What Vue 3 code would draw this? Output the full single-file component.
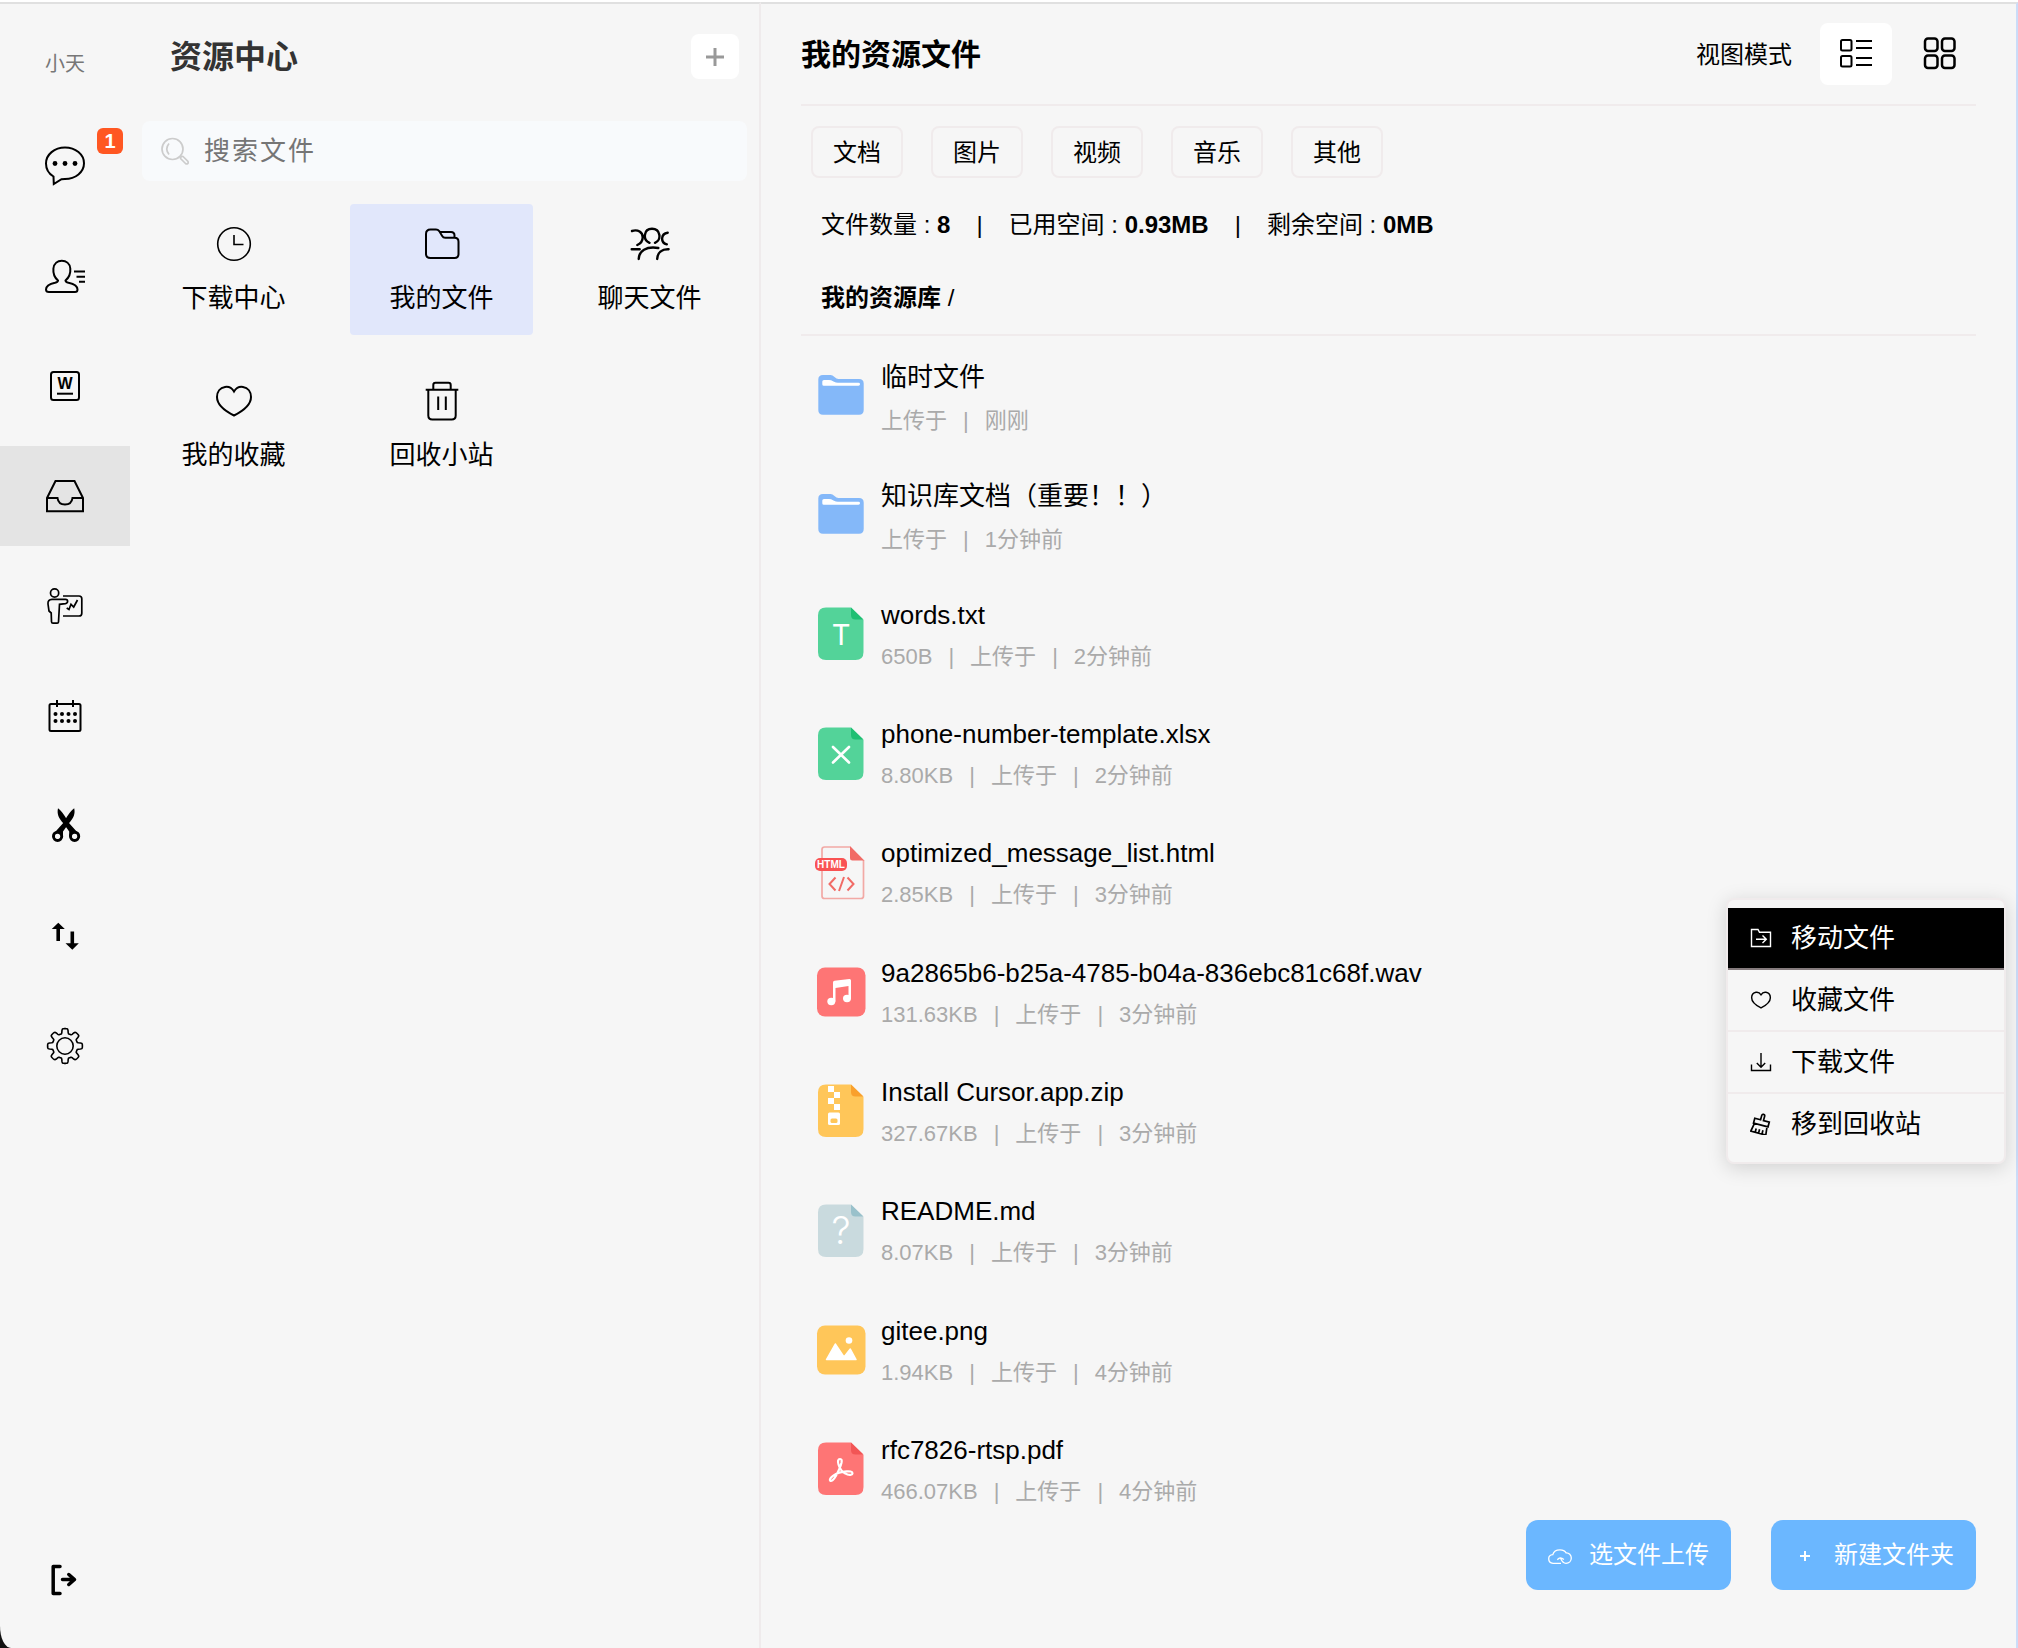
<script setup>
import { ref } from 'vue'

function gearPath(cx, cy) {
  const points = []
  for (let i = 0; i < 160; i++) {
    const a = (i / 160) * Math.PI * 2
    const r = 15 + 2.4 * Math.tanh(3 * (Math.cos(8 * a) + 0.1))
    points.push(`${(cx + r * Math.cos(a)).toFixed(2)} ${(cy + r * Math.sin(a)).toFixed(2)}`)
  }
  return `M${points.join('L')}z`
}

const heart =
  '<path d="M20 10.5C17.5 6.5 14 5.5 11 6C6 6.8 3 11 3 16C3 23.5 10 29.5 20 34.5C30 29.5 37 23.5 37 16C37 11 34 6.8 29 6C26 5.5 22.5 6.5 20 10.5z"/>'

const navItems = [
  {
    id: 'chat', label: '消息', badge: 1,
    icon: '<path d="M8.5 30.5C3.5 27.5 1 23 1 17.5C1 8.5 9.5 1.5 20 1.5S39 8.5 39 17.3S30.5 33 20 33q-2 0-3.5 .2L8.8 38z"/><g fill="#000" stroke="none"><circle cx="10" cy="17.5" r="2.4"/><circle cx="20" cy="17.5" r="2.4"/><circle cx="30" cy="17.5" r="2.4"/></g>'
  },
  {
    id: 'contacts', label: '联系人',
    icon: '<path d="M13 24.5C9.5 21.5 8 17 8.4 12.5C9 7.5 12.5 4.8 16.8 4.8S24.800 7.5 25.3 12.5C25.7 17 24 21.5 20.5 24.5q0 1.5 3 2.3q9 2 9 6.7q0 2.5-2.5 2.5H4q-3 0-3-2.5q0-4.7 9-6.7q3-.8 3-2.3z"/><path d="M29 15.4h11M31.5 20.7h8.5M34 25.8h6"/>'
  },
  {
    id: 'docs', label: '文档',
    icon: '<rect x="6" y="6" width="28" height="28" rx="2.5"/><path d="M12 27.7h16"/><text x="20" y="23" text-anchor="middle" font-size="16" font-weight="700" fill="#000" stroke="none">W</text>'
  },
  {
    id: 'files', label: '资源',
    icon: '<path d="M10.5 5h19L38 22v13.2H2V22zM2 22h10.5c.5 4 3.5 6.5 7.5 6.5s7-2.5 7.5-6.5H38"/>'
  },
  {
    id: 'meeting', label: '会议',
    icon: '<g stroke-width="1.7"><circle cx="9.6" cy="7" r="4.1"/><path d="M7 13.4H20.5c2.8 0 2.8 3.8 0 4.2L14.5 18.3L13.5 36q-.1 1.2-1.3 1.2H8q-1.4 0-1.5-1.4L6.2 27L4 25L3 18q-.4-4.4 4-4.6z"/><path d="M18 10h16q2.8 0 2.8 2.8v14.4q0 2.8-2.8 2.8H18M21.7 22l2.3 1.5l2-5.2l2.7 2.7L32.5 14"/></g>'
  },
  {
    id: 'calendar', label: '日历',
    icon: '<rect x="4.5" y="8" width="31" height="27" rx="1.5"/><path d="M12 4v7M28 4v7"/><g fill="#000" stroke="none"><circle cx="10.5" cy="18" r="2"/><circle cx="17" cy="18" r="2"/><circle cx="23.5" cy="18" r="2"/><circle cx="30" cy="18" r="2"/><circle cx="10.5" cy="25" r="2"/><circle cx="17" cy="25" r="2"/><circle cx="23.5" cy="25" r="2"/><circle cx="30" cy="25" r="2"/></g>'
  },
  {
    id: 'cut', label: '截图',
    icon: '<g stroke-width="3.2"><circle cx="12.6" cy="30.3" r="4"/><circle cx="29.6" cy="30.3" r="4"/></g><g fill="#000" stroke="none"><path d="M13 2.3C11.8 8 13.5 12 18.5 17.500L24.200 25.500V30h2L32.500 26.500L24 17C21 12 17 5 13 2.3z"/><path d="M29.2 2.3C30.4 8 28.7 12 23.7 17.500L18 25.500V30h-2L9.700 26.500L18.200 17C21.2 12 25.2 5 29.2 2.3z"/></g><g fill="#f6f6f6" stroke="none"><circle cx="12.6" cy="30.3" r="2.6"/><circle cx="29.6" cy="30.3" r="2.6"/></g>'
  },
  {
    id: 'transfer', label: '传输',
    icon: '<path fill="#000" stroke="none" d="M13.3 6.7L19.8 13H15v12h-3.6V13H6.8zM27.3 33.8L20.5 27.3h5V15.5h3.6v11.800h4.7z"/>'
  },
  {
    id: 'settings', label: '设置',
    icon: `<g stroke-width="1.6"><path d="${gearPath(20, 20)}"/><circle cx="20" cy="20" r="8.2"/></g>`
  }
]

const tiles = [
  { id: 'download', label: '下载中心', icon: '<g stroke-width="1.6"><circle cx="20" cy="20" r="16.3"/><path d="M20 11v9.5h9.5"/></g>' },
  { id: 'mine', label: '我的文件', icon: '<path d="M4 10q0-4.5 4.5-4.5h5.5q2 0 3.2 1.6l3 5q1 1.7 3 1.7h9.3q4 0 4 4V30q0 4-4 4H8.5Q4 34 4 30zM17.5 8H29q3.5 0 3.5 3.5V14"/>' },
  { id: 'chat', label: '聊天文件', icon: '<g stroke-width="2.4" stroke-linecap="round"><path d="M19.5 18.8C12.5 16 13.5 4.8 22 4.8S32 16 25 18.8M2 7c6-2 10.7 1.5 10.7 6.3c0 3.5-2 6.2-5.4 7.7M37.7 8.7c-7 1-7.5 10-.9 11.6M1.7 25.3h8M8.7 35C9 27 16 22 28.3 24M27.2 35c.3-6.5 4.5-10 11.4-9.7"/></g>' },
  { id: 'favorite', label: '我的收藏', icon: heart },
  { id: 'trash', label: '回收小站', icon: '<path d="M3.7 8.8h32.6M11.3 8.5V4q0-2.2 2.2-2.2h13Q28.7 1.8 28.7 4v4.5M6.3 9v25.5q0 4 4 4h19.4q4 0 4-4V9M16.2 15.5V29M23.8 15.5V29"/>' }
]

const filters = ['文档', '图片', '视频', '音乐', '其他']

const stats = [
  { label: '文件数量', value: '8' },
  { label: '已用空间', value: '0.93MB' },
  { label: '剩余空间', value: '0MB' }
]

const sheet = (body, fold) =>
  `<path fill="${body}" d="M11 1.500H36L48.500 14V46q0 8-8 8H11q-8 0-8-8V9.500q0-8 8-8z"/><path fill="${fold}" d="M36 1.500V9q0 4.500 4.500 4.500H48.500z"/>`
const square = (color) => `<rect fill="${color}" x="2" y="3.500" width="48.500" height="49" rx="8"/>`

const fileIcons = {
  folder: '<path fill="#84b8f9" d="M8 7h7.500q2 0 4 2t4 2H44q4.700 0 4.700 4.500V42q0 4.700-4.700 4.700H8q-4.700 0-4.700-4.700V11.500Q3.300 7 8 7z"/><path fill="#fff" d="M9 12h5q2 0 4.500 1.400t4.500 1.400H43.500q1.500 0 1.500 1.400t-1.500 1.500H8.800q-1.500 0-1.500-1.500v-2.600Q7.300 12 9 12z"/>',
  txt: sheet('#53d399', '#1fbf73') + '<text x="26" y="39" text-anchor="middle" font-family="Inter" font-weight="400" font-size="29" fill="#fff">T</text>',
  xlsx: sheet('#53d399', '#1fbf73') + '<path stroke="#fff" stroke-width="2.600" stroke-linecap="round" d="M18 21l16 15.500M34 21l-16 15.500"/>',
  html: '<path fill="none" stroke="#f2a9a5" stroke-width="1.700" d="M35 2H9.500Q7 2 7 4.500V51q0 2.500 2.500 2.500H46q2.500 0 2.500-2.500V15"/><path fill="#f16b66" d="M35 1L49.300 15.500H37.500Q35 15.500 35 13z"/><rect fill="#f95353" x="0" y="13" width="32" height="13" rx="5"/><text x="16" y="23" text-anchor="middle" font-size="10" font-weight="700" fill="#fff">HTML</text><path fill="none" stroke="#f16b66" stroke-width="2" d="M20.500 32.500L14.500 39L20.500 45.500M29 32L24 46M32.500 32.500L38.500 39L32.500 45.500"/>',
  wav: square('#fe7575') + '<g fill="#fff"><ellipse cx="16.300" cy="37.500" rx="4" ry="3.700"/><ellipse cx="32" cy="34.500" rx="4" ry="3.700"/><path d="M18 18.500q0-1.500 1.500-1.800L34.300 15q1.700-.2 1.700 1.500V34.500h-2.500V22L20.500 24V37.500H18z"/></g>',
  zip: sheet('#ffc659', '#f9a02d') + '<g fill="#fff"><path d="M13 3h6v6h-6zM19 9h6v6h-6zM13 15h6v6h-6zM19 21h6v6h-6z"/><rect x="13" y="29.500" width="12" height="12.500" rx="1.500"/></g><rect fill="#ffc659" x="15.500" y="35.500" width="7" height="4.500" rx="1.500"/>',
  md: sheet('#c9dade', '#99c1cb') + '<text x="26" y="41" text-anchor="middle" font-family="Inter" font-weight="300" font-size="38" fill="#fff">?</text>',
  png: square('#ffc659') + '<path fill="#fff" stroke="#fff" stroke-width="1.500" stroke-linejoin="round" d="M11.500 37.500L20.300 22L29 35L35.300 27L41 37.500z"/><circle fill="#fff" cx="34" cy="18.500" r="3.300"/>',
  pdf: sheet('#fe7575', '#f25555') + '<path fill="none" stroke="#fff" stroke-width="2.200" stroke-linejoin="round" d="M25 18c-2 0-2.500 2.500-1.500 5.500c1 4 4.500 8.500 9 10c2.500.8 5 .3 5-1.300c0-1.800-3-2-6-1.800c-5 .3-10 2-13.500 4.500c-2.500 1.800-3.800 3.800-2.800 4.800c1.200 1 3.500-1 5.500-4.500c2.500-4.500 5-10 5.800-13.500c.5-2.500.2-3.700-1.500-3.700z"/>'
}

const files = [
  { name: '临时文件', type: 'folder', time: '刚刚' },
  { name: '知识库文档（重要！！）', type: 'folder', time: '1分钟前' },
  { name: 'words.txt', type: 'txt', size: '650B', time: '2分钟前' },
  { name: 'phone-number-template.xlsx', type: 'xlsx', size: '8.80KB', time: '2分钟前' },
  { name: 'optimized_message_list.html', type: 'html', size: '2.85KB', time: '3分钟前' },
  { name: '9a2865b6-b25a-4785-b04a-836ebc81c68f.wav', type: 'wav', size: '131.63KB', time: '3分钟前' },
  { name: 'Install Cursor.app.zip', type: 'zip', size: '327.67KB', time: '3分钟前' },
  { name: 'README.md', type: 'md', size: '8.07KB', time: '3分钟前' },
  { name: 'gitee.png', type: 'png', size: '1.94KB', time: '4分钟前' },
  { name: 'rfc7826-rtsp.pdf', type: 'pdf', size: '466.07KB', time: '4分钟前' }
]

const menu = [
  { id: 'move', label: '移动文件', icon: '<path d="M1.500 2.500H8l1.500 2.800H20.500V19.500H1.500zM6 12.300H16M12.500 8.500L16.300 12.300L12.500 16"/>' },
  { id: 'star', label: '收藏文件', icon: `<g transform="scale(.55)" stroke-width="2.600">${heart}</g>` },
  { id: 'save', label: '下载文件', icon: '<path d="M1.500 13.500v6H20.500v-6M11 2V16M6.800 12L11 16.300L15.200 12"/>' },
  { id: 'remove', label: '移到回收站', icon: '<g transform="rotate(15 11 11)" stroke-width="1.700"><path d="M9.500 7V2.500q0-1.500 1.500-1.500t1.500 1.500V7H18.500V12H3.500V7zM4.500 12L3 20.500H18.500L17.500 12M7.500 20V16.500M11 20V16.500M14.500 20V16.500"/></g>' }
]

const activeNav = ref('files')
const activeTile = ref('mine')
const viewMode = ref('list')
const keyword = ref('')

const details = (file) => [file.size, '上传于', file.time].filter(Boolean)
</script>

<template>
  <div class="app">
    <nav class="rail">
      <div class="user">小天</div>
      <button
        v-for="item in navItems"
        :key="item.id"
        class="rail-item"
        :class="{ active: item.id === activeNav }"
        :aria-label="item.label"
        @click="activeNav = item.id"
      >
        <svg class="icon" viewBox="0 0 40 40" v-html="item.icon"></svg>
        <span v-if="item.badge" class="badge">{{ item.badge }}</span>
      </button>
      <button class="rail-item logout" aria-label="退出">
        <svg class="icon" viewBox="0 0 40 40">
          <g stroke-width="3.500" stroke-linecap="round" stroke-linejoin="round">
            <path d="M15 6.500H8.200V33.500H15M17.500 19.500H29M23.800 14.500L29.500 19.500L23.800 24.500" />
          </g>
        </svg>
      </button>
    </nav>

    <aside class="panel">
      <header class="panel-head">
        <h1>资源中心</h1>
        <button class="add" aria-label="新建">
          <svg width="18" height="18" viewBox="0 0 18 18"><path d="M9 0v18M0 9h18" stroke="#999" stroke-width="3" /></svg>
        </button>
      </header>
      <label class="search">
        <svg width="28" height="28" viewBox="0 0 28 28" fill="none" stroke="#ccc" stroke-width="1.700">
          <circle cx="11.500" cy="12" r="10.500" />
          <path d="M8 6.500q-4.500 5.500 0 11M19.500 21.500q0-2.500 2.500-2l5 5q.8 2.500-2 2.500z" />
        </svg>
        <input v-model="keyword" type="text" placeholder="搜索文件" aria-label="搜索文件" />
      </label>
      <div class="tiles">
        <button
          v-for="tile in tiles"
          :key="tile.id"
          class="tile"
          :class="{ active: tile.id === activeTile }"
          @click="activeTile = tile.id"
        >
          <svg class="icon" viewBox="0 0 40 40" v-html="tile.icon"></svg>
          <span>{{ tile.label }}</span>
        </button>
      </div>
    </aside>

    <main class="main">
      <header class="main-head">
        <h2>我的资源文件</h2>
        <div class="modes">
          <span class="modes-label">视图模式</span>
          <button class="mode" :class="{ active: viewMode === 'list' }" aria-label="列表" @click="viewMode = 'list'">
            <svg width="32" height="32" viewBox="0 0 32 32" fill="none" stroke="#000" stroke-width="2">
              <rect x="1" y="2" width="10.500" height="10.500" rx="1.500" />
              <rect x="1" y="18" width="10.500" height="10.500" rx="1.500" />
              <path d="M16 3h16M16 10h16M16 20h16M16 27h16" />
            </svg>
          </button>
          <button class="mode" :class="{ active: viewMode === 'grid' }" aria-label="网格" @click="viewMode = 'grid'">
            <svg width="34" height="34" viewBox="0 0 34 34" fill="none" stroke="#000" stroke-width="2.500">
              <rect x="2" y="1.500" width="12.500" height="12.500" rx="3" />
              <rect x="19" y="1.500" width="12.500" height="12.500" rx="3" />
              <rect x="2" y="18.500" width="12.500" height="12.500" rx="3" />
              <rect x="19" y="18.500" width="12.500" height="12.500" rx="3" />
            </svg>
          </button>
        </div>
      </header>

      <div class="filters">
        <button v-for="name in filters" :key="name" class="filter">{{ name }}</button>
      </div>

      <div class="stats">
        <template v-for="(stat, i) in stats" :key="stat.label">
          <span v-if="i">|</span>
          <span>{{ stat.label }} : <b>{{ stat.value }}</b></span>
        </template>
      </div>

      <div class="crumbs"><b>我的资源库</b> /</div>

      <ul class="files">
        <li v-for="file in files" :key="file.name" class="file" :class="{ folder: file.type === 'folder' }">
          <svg class="file-icon" width="52" height="56" viewBox="0 0 52 56" v-html="fileIcons[file.type]"></svg>
          <div class="file-text">
            <div class="file-name">{{ file.name }}</div>
            <div class="file-info">
              <template v-for="(part, i) in details(file)" :key="i">
                <span v-if="i">|</span>
                <span>{{ part }}</span>
              </template>
            </div>
          </div>
        </li>
      </ul>

      <div class="actions">
        <button class="action">
          <svg width="24" height="24" viewBox="0 0 24 24" fill="none" stroke="#fff" stroke-width="1.300">
            <path d="M13 20.300H5C2.500 20 .7 18.300 .7 15.700C.7 13.300 2.500 11.800 4.800 11.600C5.500 8.800 8.500 6.800 12 6.800C14.800 6.800 17 8 18 9.800C21 9.600 23.300 12 23.300 15C23.300 18 21 20.300 18 20.300C16 20.300 14 18.500 12.700 15.500M9.300 16.800Q11 15 12.300 14.900Q14 15 15.900 16.600" />
          </svg>
          <span>选文件上传</span>
        </button>
        <button class="action">
          <svg width="24" height="24" viewBox="0 0 24 24"><path d="M12 8v10M7 13h10" stroke="#fff" stroke-width="2" /></svg>
          <span>新建文件夹</span>
        </button>
      </div>

      <div class="menu" role="menu">
        <button v-for="(item, i) in menu" :key="item.id" class="menu-item" :class="{ active: i === 0 }" role="menuitem">
          <svg width="22" height="22" viewBox="0 0 22 22" fill="none" stroke="currentColor" stroke-width="1.400" v-html="item.icon"></svg>
          <span>{{ item.label }}</span>
        </button>
      </div>
    </main>
  </div>
</template>

<style>
body {
  margin: 0;
  background: #111;
}
</style>

<style scoped>
.app {
  display: flex;
  box-sizing: border-box;
  min-height: 100vh;
  border-top: 2px solid #fff;
  border-bottom-left-radius: 11px 22px;
  background: #f6f6f6;
  color: #000;
  font-family: "Liberation Sans", "Noto Sans CJK SC", sans-serif;
  font-size: 24px;
  line-height: 36px;
}
.rail,
.panel,
.main {
  box-sizing: border-box;
  border-top: 2px solid #e0e0e0;
}
button {
  padding: 0;
  border: 0;
  background: none;
  color: inherit;
  font: inherit;
  cursor: pointer;
}
h1,
h2 {
  margin: 0;
  font-weight: 700;
}
.icon {
  width: 40px;
  height: 40px;
  fill: none;
  stroke: #000;
  stroke-width: 2;
}

.rail {
  display: flex;
  flex: none;
  flex-direction: column;
  gap: 10px;
  width: 130px;
  padding-bottom: 18px;
}
.user {
  box-sizing: border-box;
  height: 102px;
  padding-top: 42px;
  color: #777;
  font-size: 20px;
  text-align: center;
}
.rail-item {
  position: relative;
  display: flex;
  align-items: center;
  justify-content: center;
  height: 100px;
}
.rail-item.active {
  background: #e4e4e4;
}
.logout {
  margin-top: auto;
}
.badge {
  position: absolute;
  top: 12px;
  right: 7px;
  width: 26px;
  border-radius: 6px;
  background: #ff5722;
  color: #fff;
  font-size: 20px;
  font-weight: 700;
  line-height: 26px;
}

.panel {
  flex: none;
  width: 631px;
  padding: 0 12px;
  border-right: 2px solid #efebec;
}
.panel-head {
  display: flex;
  align-items: center;
  justify-content: space-between;
  height: 105px;
  margin-bottom: 12px;
  padding: 0 8px 0 28px;
}
h1 {
  color: #333;
  font-size: 32px;
}
.add {
  display: flex;
  align-items: center;
  justify-content: center;
  width: 48px;
  height: 45px;
  border-radius: 8px;
  background: #fff;
}
.search {
  display: flex;
  align-items: center;
  gap: 15px;
  height: 60px;
  padding: 0 19px;
  border-radius: 8px;
  background: #f8fafc;
}
.search input {
  flex: 1;
  min-width: 0;
  padding: 0;
  border: 0;
  outline: 0;
  background: none;
  font: inherit;
  font-size: 26px;
  letter-spacing: 2px;
}
.search input::placeholder {
  color: #757575;
}
.tiles {
  display: grid;
  grid-template-columns: repeat(3, 183px);
  gap: 26px 25px;
  margin-top: 23px;
}
.tile {
  display: flex;
  flex-direction: column;
  align-items: center;
  gap: 16px;
  padding: 20px 0 19px;
  border-radius: 4px;
  font-size: 26px;
}
.tile.active {
  background: #e1e7fb;
}

.main {
  position: relative;
  display: flex;
  flex: 1;
  flex-direction: column;
  min-width: 0;
  padding: 0 40px 119px;
  border-right: 2px solid #cbdcf8;
}
.main-head {
  display: flex;
  align-items: center;
  justify-content: space-between;
  height: 100px;
  border-bottom: 2px solid #f0ebec;
}
h2 {
  padding-top: 2px;
  font-size: 30px;
}
.modes {
  display: flex;
  align-items: center;
  gap: 12px;
}
.modes-label {
  margin-right: 16px;
  padding-top: 2px;
}
.mode {
  display: flex;
  align-items: center;
  justify-content: center;
  width: 72px;
  height: 62px;
  border-radius: 8px;
}
.mode.active {
  background: #fff;
}
.filters {
  display: flex;
  gap: 28px;
  margin-top: 20px;
  padding-left: 10px;
}
.filter {
  width: 92px;
  height: 52px;
  padding-top: 2px;
  border: 2px solid #f0ebec;
  border-radius: 8px;
}
.stats {
  display: flex;
  gap: 26px;
  margin-top: 29px;
  padding-left: 20px;
}
.crumbs {
  margin-top: 37px;
  padding: 0 20px 18px;
  border-bottom: 2px solid #f0ebec;
}
.files {
  display: flex;
  flex: 1;
  flex-direction: column;
  margin: 0;
  padding: 0 14px;
  list-style: none;
}
.file {
  display: flex;
  flex: 1;
  align-items: center;
  gap: 14px;
}
.file-icon {
  flex: none;
}
.file-text {
  display: flex;
  flex-direction: column;
  gap: 6px;
  padding-top: 3px;
}
.file.folder .file-text {
  gap: 8px;
  padding-top: 6px;
}
.file-name {
  font-size: 26px;
}
.file-info {
  display: flex;
  gap: 16px;
  color: #aaa;
  font-size: 22px;
}
.actions {
  position: absolute;
  right: 40px;
  bottom: 58px;
  display: flex;
  gap: 40px;
}
.action {
  display: flex;
  align-items: center;
  gap: 17px;
  height: 70px;
  padding: 0 22px;
  border-radius: 12px;
  background: #6bb7ff;
  color: #fff;
}
.menu {
  position: absolute;
  top: 894px;
  right: 10px;
  display: flex;
  flex-direction: column;
  box-sizing: border-box;
  width: 280px;
  padding: 8px 0;
  border: 2px solid #f0ebec;
  border-radius: 8px;
  background: #f6f6f6;
  box-shadow: 0 4px 20px rgba(0, 0, 0, 0.15);
}
.menu-item {
  display: flex;
  align-items: center;
  gap: 19px;
  height: 62px;
  padding: 0 22px;
  border-bottom: 2px solid #f0ebec;
  font-size: 26px;
}
.menu-item:last-child {
  height: 60px;
  border-bottom: 0;
}
.menu-item.active {
  border-bottom-color: #857b7d;
  background: #000;
  color: #fff;
}
</style>
